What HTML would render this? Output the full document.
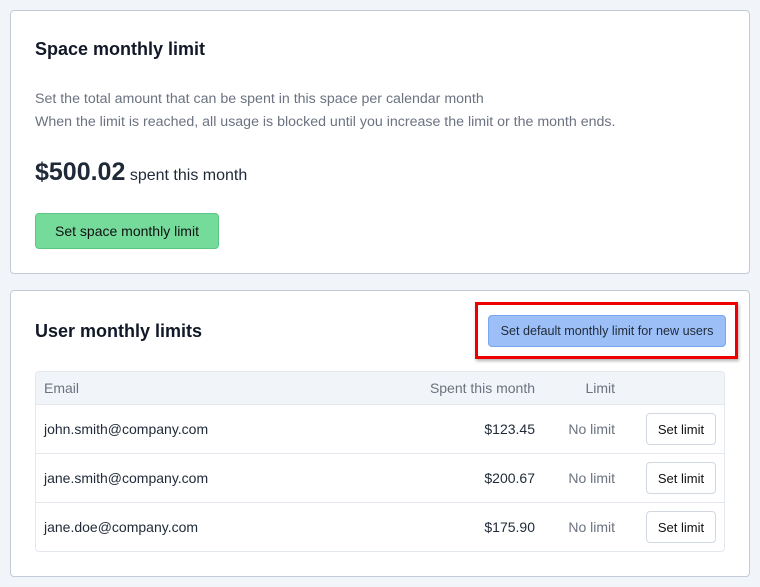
<!DOCTYPE html>
<html><head><style>
body{margin:0;background:#f1f4f9;font-family:"Liberation Sans",sans-serif;width:760px;height:587px;position:relative;overflow:hidden}
.card{position:absolute;left:10px;width:740px;background:#fff;border:1px solid #c3cbd9;border-radius:4px;box-sizing:border-box}
.abs{position:absolute;white-space:nowrap}
h2{margin:0;font-size:18px;font-weight:bold;color:#111827}
.desc{font-size:14.2px;color:#6b7280}
.btn{position:absolute;box-sizing:border-box;border-radius:4px;font-size:13px;color:#111;display:flex;align-items:center;justify-content:center}
.row{position:absolute;left:0;width:688px;height:49px;border-top:1px solid #e3e7ee;font-size:14px;color:#1f2937;box-sizing:border-box}
</style></head><body>
<div class="card" style="top:10px;height:264px">
  <h2 class="abs" style="left:24px;top:28px">Space monthly limit</h2>
  <div class="abs desc" style="left:24px;top:80px">Set the total amount that can be spent in this space per calendar month</div>
  <div class="abs desc" style="left:24px;top:103px">When the limit is reached, all usage is blocked until you increase the limit or the month ends.</div>
  <div class="abs" style="left:24px;top:147px;color:#1f2937"><span style="font-size:25px;font-weight:bold">$500.02</span> <span style="font-size:16px">spent this month</span></div>
  <div class="btn" style="left:24px;top:202px;width:184px;height:36px;background:#74db9a;border:1px solid #5cc685;font-size:14px">Set space monthly limit</div>
</div>
<div class="card" style="top:290px;height:287px">
  <h2 class="abs" style="left:24px;top:30px">User monthly limits</h2>
  <div class="abs" style="left:464px;top:11px;width:257px;height:51px;border:3px solid #e00;box-shadow:1px 2px 3px rgba(0,0,0,.3)"></div>
  <div class="btn" style="left:477px;top:24px;width:238px;height:32px;background:#9dbff8;border:1px solid #7aa5f0;color:#1f2937;font-size:12.6px">Set default monthly limit for new users</div>
  <div class="abs" style="left:24px;top:80px;width:690px;height:181px;border:1px solid #e3e7ee;border-radius:4px;overflow:hidden;box-sizing:border-box">
    <div style="position:absolute;left:0;top:0;width:690px;height:33px;background:#f1f4f9;font-size:14px;color:#6b7280">
      <span class="abs" style="left:8px;top:8px">Email</span>
      <span class="abs" style="right:191px;top:8px">Spent this month</span>
      <span class="abs" style="right:111px;top:8px">Limit</span>
    </div>
    <div class="row" style="top:32px"><span class="abs" style="left:8px;top:16px">john.smith@company.com</span><span class="abs" style="right:1px;top:16px;right:189px">$123.45</span><span class="abs" style="right:109px;top:16px;color:#6b7280">No limit</span><div class="btn" style="left:610px;top:8px;width:70px;height:32px;border:1px solid #d1d8e2">Set limit</div></div>
    <div class="row" style="top:81px"><span class="abs" style="left:8px;top:16px">jane.smith@company.com</span><span class="abs" style="right:189px;top:16px">$200.67</span><span class="abs" style="right:109px;top:16px;color:#6b7280">No limit</span><div class="btn" style="left:610px;top:8px;width:70px;height:32px;border:1px solid #d1d8e2">Set limit</div></div>
    <div class="row" style="top:130px"><span class="abs" style="left:8px;top:16px">jane.doe@company.com</span><span class="abs" style="right:189px;top:16px">$175.90</span><span class="abs" style="right:109px;top:16px;color:#6b7280">No limit</span><div class="btn" style="left:610px;top:8px;width:70px;height:32px;border:1px solid #d1d8e2">Set limit</div></div>
  </div>
</div>
</body></html>
